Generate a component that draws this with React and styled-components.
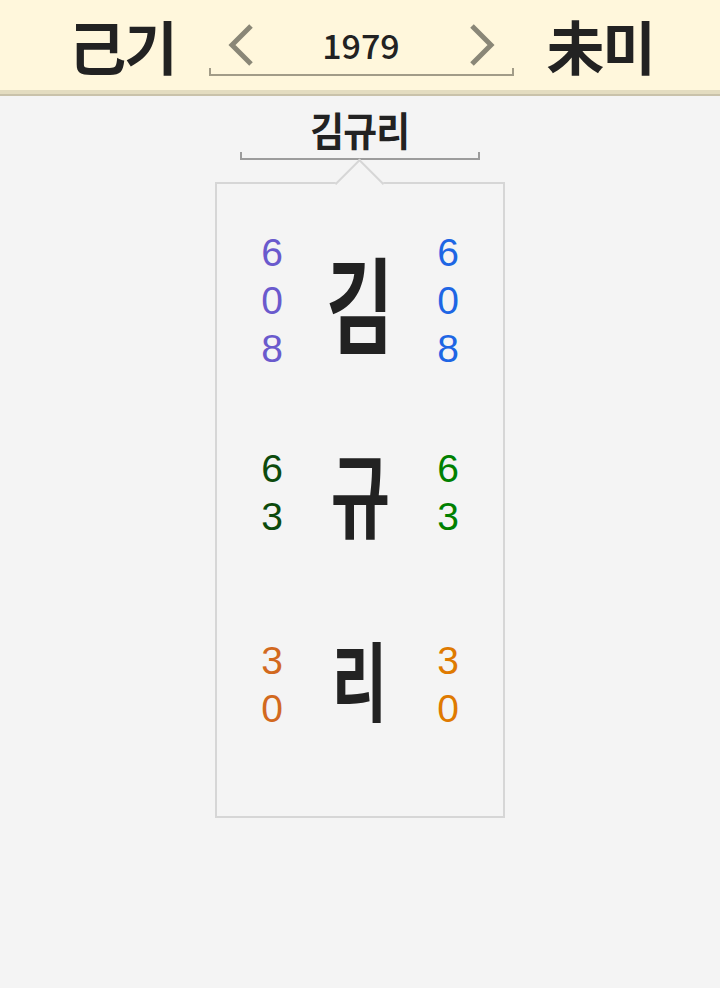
import React from 'react';
import styled, { createGlobalStyle } from 'styled-components';

const GlobalStyle = createGlobalStyle`
  html, body {
    margin: 0;
    padding: 0;
    background: #f4f4f4;
  }
  body {
    font-family: "Noto Sans CJK KR", "Noto Sans", sans-serif;
    color: #222;
  }
`;

const Header = styled.header`
  display: flex;
  align-items: center;
  justify-content: center;
  gap: 35px;
  height: 90px;
  background: #fff7dc;
  border-bottom: 4px solid #e3dcc0;
  box-shadow: 0 2px 0 #c9c2aa;
  padding-left: 2px;
`;

const Pillar = styled.div`
  font-size: 58px;
  font-weight: 700;
  line-height: 1;
  letter-spacing: -2px;
  color: #222;
`;

const YearNav = styled.div`
  position: relative;
  width: 301px;
  height: 56px;
  margin-top: 6px;
  display: flex;
  align-items: center;
  justify-content: space-between;
  padding: 0 16px 4px 16px;
  box-sizing: border-box;
  border-bottom: 2px solid #a29c88;

  &::before,
  &::after {
    content: '';
    position: absolute;
    bottom: -2px;
    width: 2px;
    height: 8px;
    background: #a29c88;
  }
  &::before { left: -2px; }
  &::after { right: -2px; }
`;

const Year = styled.span`
  font-size: 34px;
  font-weight: 500;
  line-height: 1;
  color: #222;
`;

const Chevron = ({ dir }) => (
  <svg width="30" height="44" viewBox="0 0 30 44">
    <polyline
      points={dir === 'left' ? '24,3 5,22 24,41' : '6,3 25,22 6,41'}
      fill="none"
      stroke="#8a8777"
      strokeWidth="5"
    />
  </svg>
);

const Main = styled.main`
  display: flex;
  flex-direction: column;
  align-items: center;
  padding-top: 10px;
`;

const NameBlock = styled.div`
  position: relative;
  width: 236px;
  display: flex;
  justify-content: center;
  padding-bottom: 4px;
  border-bottom: 2px solid #9c9c9c;

  &::before,
  &::after {
    content: '';
    position: absolute;
    bottom: -2px;
    width: 2px;
    height: 8px;
    background: #9c9c9c;
  }
  &::before { left: -2px; }
  &::after { right: -2px; }
`;

const Name = styled.h1`
  margin: 0;
  font-size: 40px;
  font-weight: 700;
  line-height: 50px;
  letter-spacing: -1px;
  color: #222;
  transform: scaleX(0.92);
`;

const Card = styled.section`
  position: relative;
  margin-top: 22px;
  width: 286px;
  padding: 21px 0 35px;
  border: 2px solid #d6d6d6;
  background: #f4f4f4;

  &::before {
    content: '';
    position: absolute;
    top: -18px;
    left: 125px;
    width: 33px;
    height: 33px;
    background: #f4f4f4;
    border-top: 2px solid #d6d6d6;
    border-left: 2px solid #d6d6d6;
    transform: rotate(45deg);
  }
`;

const Row = styled.div`
  display: grid;
  grid-template-columns: 40px 96px 40px;
  column-gap: 20px;
  justify-content: center;
  align-items: center;
  justify-items: center;
  height: 192px;
`;

const Digits = styled.div`
  display: flex;
  flex-direction: column;
  align-items: center;
  font-family: "Liberation Sans", Arial, sans-serif;
  font-size: 39px;
  font-weight: 400;
  line-height: 48px;
  color: ${p => p.color};
`;

const Syllable = styled.div`
  font-size: ${p => p.size}px;
  font-weight: 700;
  line-height: 1;
  color: #222;
  transform: scaleX(0.7);
  margin-top: ${p => p.shift}px;
`;

const rows = [
  { ch: '김', size: 104, shift: 0, nums: ['6', '0', '8'], left: '#6a5acd', right: '#1e66e4' },
  { ch: '규', size: 92, shift: -4, nums: ['6', '3'], left: '#0c4a0c', right: '#008000' },
  { ch: '리', size: 86, shift: -14, nums: ['3', '0'], left: '#d2691e', right: '#df7a00' },
];

export default function App() {
  return (
    <>
      <GlobalStyle />
      <Header>
        <Pillar>己기</Pillar>
        <YearNav>
          <Chevron dir="left" />
          <Year>1979</Year>
          <Chevron dir="right" />
        </YearNav>
        <Pillar>未미</Pillar>
      </Header>
      <Main>
        <NameBlock>
          <Name>김규리</Name>
        </NameBlock>
        <Card>
          {rows.map(r => (
            <Row key={r.ch}>
              <Digits color={r.left}>
                {r.nums.map((n, i) => <span key={i}>{n}</span>)}
              </Digits>
              <Syllable size={r.size} shift={r.shift}>{r.ch}</Syllable>
              <Digits color={r.right}>
                {r.nums.map((n, i) => <span key={i}>{n}</span>)}
              </Digits>
            </Row>
          ))}
        </Card>
      </Main>
    </>
  );
}
